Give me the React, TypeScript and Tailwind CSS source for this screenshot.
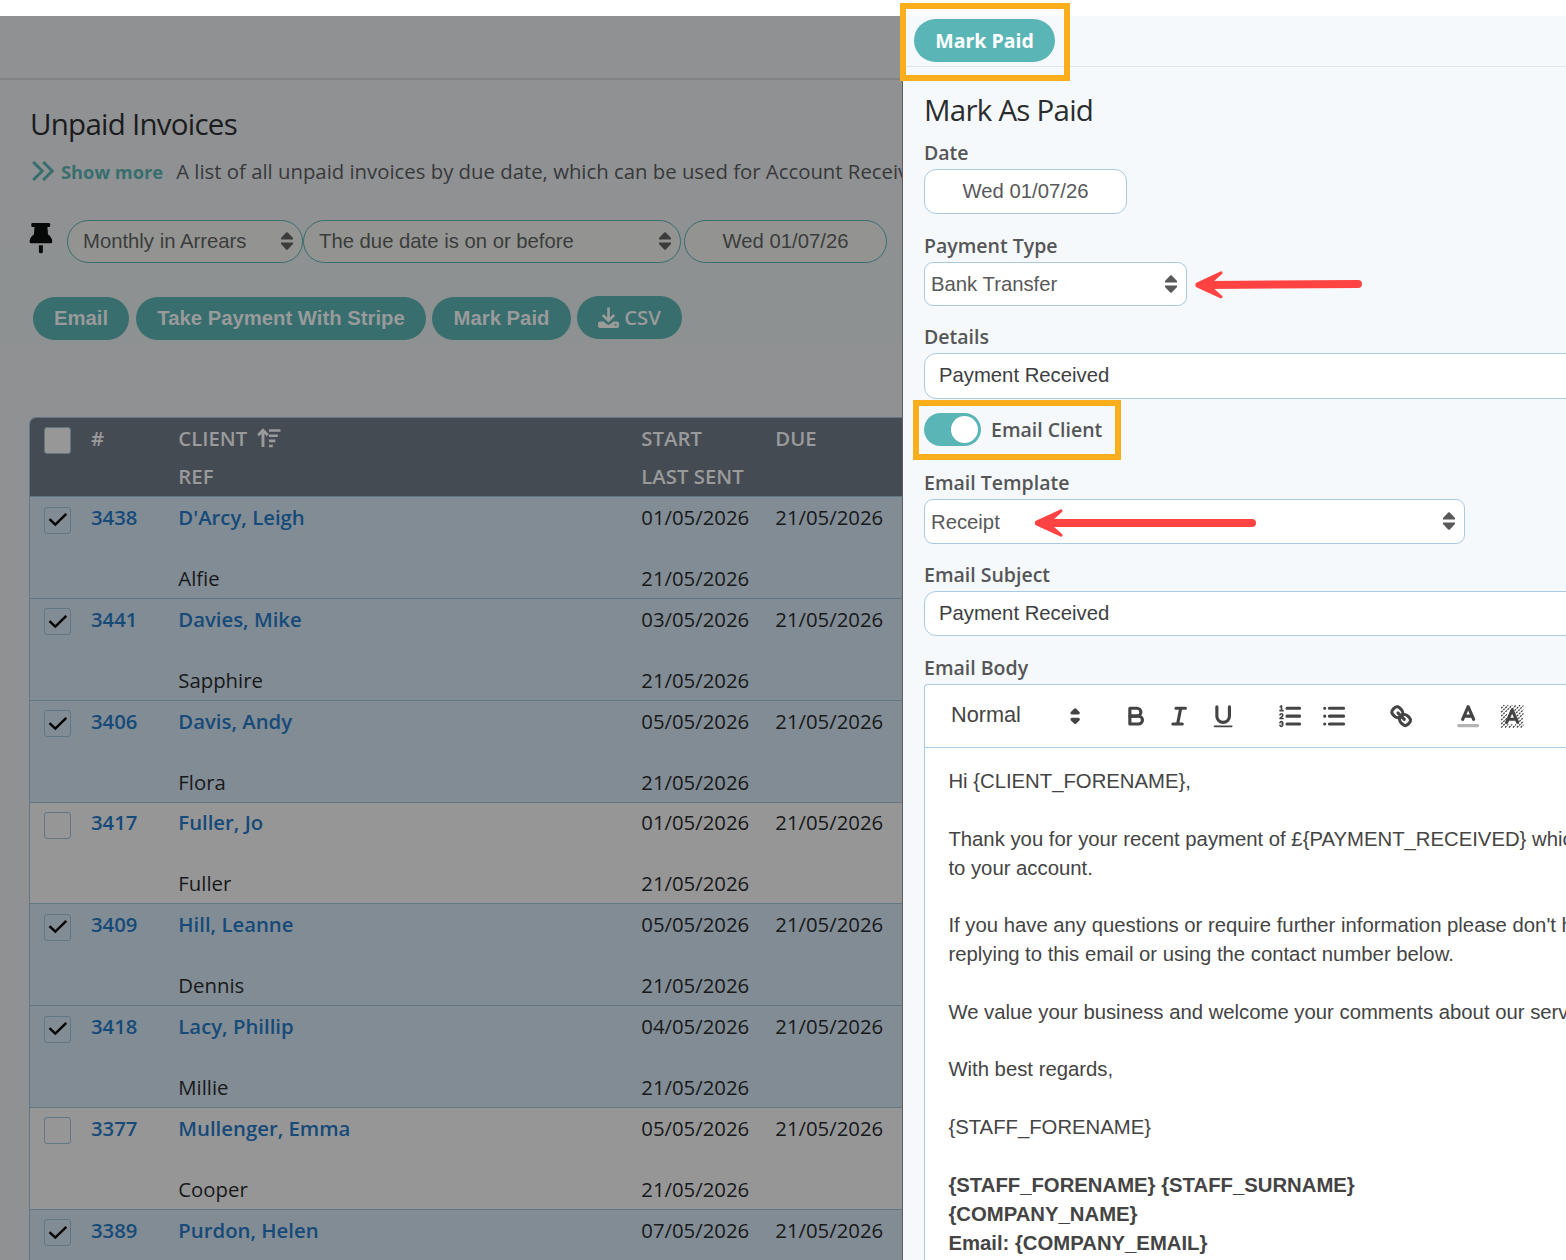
import React from "react";

const OPEN = "font-['Open_Sans',sans-serif]";
const ARIAL = "font-['Liberation_Sans',Arial,sans-serif]";

function Carets({ className = "" }: { className?: string }) {
  return (
    <svg viewBox="0 0 12 18" className={"h-[18px] w-[12px] shrink-0 " + className} fill="currentColor">
      <path d="M5.2 .6a1.2 1.2 0 0 1 1.6 0L12 6v1.6H0V6z" />
      <path d="M5.2 17.4a1.2 1.2 0 0 0 1.6 0L12 12v-1.6H0V12z" />
    </svg>
  );
}

function Check() {
  return (
    <svg viewBox="0 0 20 16" className="h-[16px] w-[20px]" fill="none" stroke="#000" strokeWidth="2.4">
      <path d="M1.500 7.200l5.800 5.400L18.300 1.800" />
    </svg>
  );
}

function Pin() {
  return (
    <svg viewBox="0 0 24 31" className="mb-[7px] h-[31px] w-[24px] shrink-0" fill="#060808">
      <path d="M3.600 0h16.300q1.300 0 1.300 1.300v1.400q0 1.300-1.300 1.300h-1.500l.6 7.600c2.600 1.600 4 3.900 4.300 6.900q.1 1.700-1.400 1.700H2q-1.500 0-1.400-1.700c.3-3 1.700-5.300 4.300-6.900l.6-7.600H3.600q-1.300 0-1.300-1.300V1.300Q2.300 0 3.600 0z" />
      <path d="M9.900 22.200h4v6.500q0 1.600-2 1.600t-2-1.600z" />
    </svg>
  );
}

function DownloadIcon() {
  return (
    <svg viewBox="0 0 21 21" className="h-[21px] w-[21px]" fill="none" stroke="#9a9c9a" strokeWidth="2.600">
      <path d="M10.500 .5v13M4.800 8l5.700 5.700L16.200 8" />
      <path fill="#9a9c9a" stroke="none" d="M2 14.600h3.600l3 2.400q1.900 1.400 3.800 0l3-2.400H19q2 0 2 2v2.400q0 2-2 2H2q-2 0-2-2v-2.400q0-2 2-2zM17.700 16.800a1 1 0 1 0 0 2 1 1 0 0 0 0-2z" />
    </svg>
  );
}

function SortIcon() {
  return (
    <svg viewBox="0 0 24 20" className="h-[20px] w-[24px]" fill="none" stroke="#999a9b" strokeWidth="2.900">
      <path d="M6 19V2.500M1.200 7.300L6 2.300l4.800 5" />
      <path d="M12 2.500h11.500M12 7.700h8.800M12 12.900h6.400M12 18h3.800" strokeWidth="2.600" />
    </svg>
  );
}

const rows = [
  { id: "3438", name: "D'Arcy, Leigh", ref: "Alfie", start: "01/05/2026", on: true },
  { id: "3441", name: "Davies, Mike", ref: "Sapphire", start: "03/05/2026", on: true },
  { id: "3406", name: "Davis, Andy", ref: "Flora", start: "05/05/2026", on: true },
  { id: "3417", name: "Fuller, Jo", ref: "Fuller", start: "01/05/2026", on: false },
  { id: "3409", name: "Hill, Leanne", ref: "Dennis", start: "05/05/2026", on: true },
  { id: "3418", name: "Lacy, Phillip", ref: "Millie", start: "04/05/2026", on: true },
  { id: "3377", name: "Mullenger, Emma", ref: "Cooper", start: "05/05/2026", on: false },
  { id: "3389", name: "Purdon, Helen", ref: "", start: "07/05/2026", on: true },
];

const GRID = "grid grid-cols-[61px_87.300px_463px_134px_200px]";
const PILL = "flex h-[43px] shrink-0 items-center rounded-full border border-[#386e6e] bg-[#939492] text-[#3b3c3b]";
const BTN = "flex h-[43px] shrink-0 items-center justify-center rounded-full bg-[#386e6e] font-bold text-[#999a9b]";

function Invoices() {
  return (
    <main className="flex h-full w-[902px] shrink-0 flex-col overflow-hidden whitespace-nowrap bg-[#909193]">
      <div className="h-[64px] shrink-0 border-b-2 border-[#828385]" />
      <h1 className={OPEN + " mt-[24px] h-[40px] pl-[30px] text-[29.500px] leading-[40px] tracking-[-0.750px] text-[#1b1c1e]"}>Unpaid Invoices</h1>
      <div className={OPEN + " mt-[13px] flex h-[30px] items-center pl-[32px] text-[20.330px] leading-[30px] text-[#37393a]"}>
        <svg viewBox="0 0 22 20" className="mb-[2px] mr-[7px] h-[20px] w-[22px] shrink-0" fill="none" stroke="#386e6e" strokeWidth="3">
          <path d="M1.200 1l9 9-9 9M11.200 1l9 9-9 9" />
        </svg>
        <b className="mr-[13px] text-[18.300px] font-bold text-[#386e6e]">Show more</b>
        <span className="mb-[2px]">A list of all unpaid invoices by due date, which can be used for Account Receivables</span>
      </div>
      <div className="flex h-[214px] shrink-0 flex-col bg-linear-to-b from-[#909193] via-[#8d9191] to-[#909193]">
        <div className={ARIAL + " mt-[33px] flex h-[43px] items-center pl-[29px] text-[20.300px]"}>
          <Pin />
          <div className={PILL + " ml-[14px] w-[236px] justify-between pl-[15px] pr-[9px]"}>Monthly in Arrears<Carets className="mb-px" /></div>
          <div className={PILL + " w-[378px] justify-between pl-[15px] pr-[9px]"}>The due date is on or before<Carets className="mb-px" /></div>
          <div className={PILL + " ml-[3px] w-[203px] justify-center"}>Wed 01/07/26</div>
        </div>
        <div className={ARIAL + " mt-[33px] flex h-[44px] items-end gap-[6px] pl-[33px] text-[20.300px]"}>
          <div className={BTN + " mr-px w-[96px]"}>Email</div>
          <div className={BTN + " w-[290px]"}>Take Payment With Stripe</div>
          <div className={BTN + " w-[139px]"}>Mark Paid</div>
          <div className={BTN + " " + OPEN + " mb-px w-[105px] gap-[5px] text-[20.330px] !font-semibold"}><DownloadIcon />CSV</div>
        </div>
      </div>
      <div className="ml-[29px] mt-[16px] shrink-0 overflow-hidden rounded-tl-[7px] border-l border-t border-[#637684]">
        <div className={GRID + " " + OPEN + " h-[79.300px] border-b border-[#637684] bg-[#454b53] pt-px text-[20.330px] font-semibold leading-[38px] text-[#999a9b]"}>
          <div className="pl-[14px] pt-[8px]"><div className="h-[27px] w-[27px] rounded-[3px] border border-[#637684] bg-[#979797]" /></div>
          <div>#</div>
          <div><div className="flex items-center gap-[10px]">CLIENT <SortIcon /></div>REF</div>
          <div>START<br />LAST SENT</div>
          <div>DUE</div>
        </div>
        {rows.map((r) => (
          <div key={r.id} className={GRID + " " + OPEN + " h-[101.800px] border-b border-[#637684] pt-[4.700px] text-[20.330px] leading-[30px] text-[#17191b] " + (r.on ? "bg-[#828c94]" : "bg-[#969696]")}>
            <div className="pl-[14px] pt-[4.600px]"><div className="flex h-[27px] w-[27px] items-center justify-center rounded-[3px] border border-[#637684]">{r.on && <Check />}</div></div>
            <div className="font-semibold text-[#164a78]">{r.id}</div>
            <div><div className="font-semibold text-[#164a78]">{r.name}</div><div className="mt-[31px]">{r.ref}</div></div>
            <div>{r.start}<div className="mt-[31px]">21/05/2026</div></div>
            <div>21/05/2026</div>
          </div>
        ))}
      </div>
    </main>
  );
}

const LABEL = "block h-[28px] text-[19.500px] font-semibold leading-[28px] text-[#555657] font-['Open_Sans',sans-serif]";
const INPUT = "flex shrink-0 items-center border border-[#a9cae2] bg-white text-[20.300px] text-[#3d3e3f] font-['Liberation_Sans',Arial,sans-serif]";

function Icon({ children, className = "" }: { children: React.ReactNode; className?: string }) {
  return (
    <svg viewBox="0 0 18 18" className={"h-[28.300px] w-[28.300px] shrink-0 " + className} fill="none" stroke="#444" strokeWidth="2" strokeLinecap="round" strokeLinejoin="round">
      {children}
    </svg>
  );
}

function Toolbar() {
  return (
    <div className={ARIAL + " flex h-[63px] items-center border-b border-[#a9cae2] pl-[26px] text-[21.700px] text-[#444]"}>
      <span className="mt-[-1px] w-[110px]">Normal</span>
      <Icon>
        <polygon fill="#444" points="7 11 9 13 11 11" />
        <polygon fill="#444" points="7 7 9 5 11 7" />
      </Icon>
      <Icon className="ml-[32.500px]">
        <path d="M5,4H9.500A2.500,2.500,0,0,1,12,6.500v0A2.500,2.500,0,0,1,9.500,9H5V4Z" />
        <path d="M5,9h5.500A2.500,2.500,0,0,1,13,11.500v0A2.500,2.500,0,0,1,10.500,14H5V9Z" />
      </Icon>
      <Icon className="ml-[15px]"><path d="M7 4h6M5 14h6M8 14L10 4" /></Icon>
      <Icon className="ml-[15.500px]">
        <path d="M5,3V9a4.012,4.012,0,0,0,4,4H9a4.012,4.012,0,0,0,4-4V3" />
        <rect x="3" y="15" width="12" height="1" rx=".5" fill="#444" stroke="none" />
      </Icon>
      <Icon className="ml-[39.200px]">
        <path d="M7 4h8M7 9h8M7 14h8" />
        <g strokeWidth="1">
          <path d="M2.500 5.500h2M2.700 3l.8-.5v3" />
          <path d="M4.500,10.500h-2c0-.234,1.850-1.076,1.850-2.234A0.959,0.959,0,0,0,2.500,8.156" />
          <path d="M2.500,14.846a0.959,0.959,0,0,0,1.850-.109A0.700,0.700,0,0,0,3.750,14a0.688,0.688,0,0,0,.6-0.736,0.959,0.959,0,0,0-1.850-.109" />
        </g>
      </Icon>
      <Icon className="ml-[15.700px]"><path d="M6 4h9M6 9h9M6 14h9M3 4h0M3 9h0M3 14h0" /></Icon>
      <Icon className="ml-[38.700px]">
        <path d="M7 7l4 4" />
        <path d="M8.900,4.577a3.476,3.476,0,0,1,.36,4.679A3.476,3.476,0,0,1,4.577,8.900C3.185,7.500,2.035,6.400,4.217,4.217S7.500,3.185,8.900,4.577Z" />
        <path d="M13.423,9.100a3.476,3.476,0,0,0-4.679-.36,3.476,3.476,0,0,0,.36,4.679c1.392,1.392,2.500,2.542,4.679.36S14.815,10.500,13.423,9.100Z" />
      </Icon>
      <Icon className="ml-[38.700px]">
        <path d="M3 15h12" strokeOpacity=".4" />
        <path d="M5.500 11L9 3l3.500 8M11.630 9H6.380" />
      </Icon>
      <Icon className="ml-[15.600px]">
        <g strokeWidth=".8" strokeDasharray="1.300 .6" strokeLinecap="butt">
          <path d="M2 4l2-2M2 6.500l4.500-4.500M2 9l7-7M2 11.500l4-4M2 14l4-4M2 16.300l3-3M9 4.500l2.500-2.500M10.500 5.500L14 2M11.500 7L16.200 2.300M12 9l4.200-4.200M12.800 10.700l3.400-3.400M13.500 12.500l2.700-2.700M4.500 16.200l2-2M7 16.200l2-2M9.500 16.200l2-2M12 16.200l4.200-4M14.400 16.200l1.800-1.800" />
        </g>
        <path d="M5.500 13L9 5l3.500 8M11.630 11H6.380" />
      </Icon>
    </div>
  );
}

function Panel() {
  return (
    <aside className="flex h-full w-[664px] shrink-0 flex-col overflow-hidden whitespace-nowrap border-l border-[#5c5d5e] bg-[#f5f9fc]">
      <div className="flex h-[51px] shrink-0 items-start border-b border-[#e4e6e8] pl-[11px] pt-[3px]">
        <button className={OPEN + " h-[43px] w-[141px] rounded-full bg-[#5ab6b6] text-[19.500px] font-bold text-white"}>Mark Paid</button>
      </div>
      <div className="flex grow flex-col pl-[21px]">
        <h2 className={OPEN + " mt-[23px] h-[40px] text-[29.500px] leading-[40px] tracking-[-0.750px] text-[#2c2d2e]"}>Mark As Paid</h2>
        <label className={LABEL + " mt-[9px]"}>Date</label>
        <div className={INPUT + " mt-[2px] h-[45px] w-[203px] justify-center rounded-[12px] !text-[#58595a]"}>Wed 01/07/26</div>
        <label className={LABEL + " mt-[18px]"}>Payment Type</label>
        <div className={INPUT + " mt-[2px] h-[44px] w-[263px] justify-between rounded-[9px] pl-[6px] pr-[9px] !text-[#58595a]"}>Bank Transfer<Carets /></div>
        <label className={LABEL + " mt-[17px]"}>Details</label>
        <div className={INPUT + " mt-[2px] h-[46px] w-[700px] rounded-[12px] pl-[14px] pb-[2px]"}>Payment Received</div>
        <div className="mt-[14px] flex h-[33px] items-center">
          <div className="flex h-[33px] w-[57px] items-center justify-end rounded-full bg-[#5ab6b6] pr-[3px]"><div className="h-[27px] w-[27px] rounded-full bg-white" /></div>
          <span className={LABEL + " ml-[10px]"}>Email Client</span>
        </div>
        <label className={LABEL + " mt-[23px]"}>Email Template</label>
        <div className={INPUT + " mt-[2px] h-[45px] w-[541px] justify-between rounded-[9px] pl-[6px] pr-[9px] pt-px !text-[#58595a]"}>Receipt<Carets className="mb-[2px]" /></div>
        <label className={LABEL + " mt-[17px]"}>Email Subject</label>
        <div className={INPUT + " mt-[2px] h-[45px] w-[700px] rounded-[12px] pl-[14px]"}>Payment Received</div>
        <label className={LABEL + " mt-[18px]"}>Email Body</label>
        <div className="mt-[2px] w-[700px] grow rounded-tl-[4px] border-l border-t border-[#a9cae2] bg-white">
          <Toolbar />
          <div className={ARIAL + " whitespace-pre pl-[23.400px] pt-[19px] text-[20.310px] leading-[28.840px] text-[#444]"}>
            {"Hi {CLIENT_FORENAME},\n\nThank you for your recent payment of £{PAYMENT_RECEIVED} which has been applied\nto your account.\n\nIf you have any questions or require further information please don't hesitate\nreplying to this email or using the contact number below.\n\nWe value your business and welcome your comments about our services.\n\nWith best regards,\n\n{STAFF_FORENAME}\n\n"}
            <b>{"{STAFF_FORENAME} {STAFF_SURNAME}\n{COMPANY_NAME}\nEmail: {COMPANY_EMAIL}"}</b>
          </div>
        </div>
      </div>
    </aside>
  );
}

export default function App() {
  return (
    <div className="relative flex h-[1260px] w-[1566px] overflow-hidden bg-white pt-[16px]">
      <Invoices />
      <Panel />
      <div className="absolute left-[900px] top-[3px] h-[78px] w-[170px] border-[6px] border-[#fbae1b]" />
      <div className="absolute left-[913px] top-[400px] h-[60px] w-[208px] border-[6px] border-[#fbae1b]" />
      <svg className="absolute left-[1194px] top-[268px] h-[34px] w-[170px]" fill="#ff4343" stroke="#ff4343" strokeLinecap="round">
        <path d="M16 17L164 16" strokeWidth="8" />
        <path d="M3 16L27 4.800L18 13V21L27 28.800L3 18Z" strokeWidth="3" strokeLinejoin="round" />
      </svg>
      <svg className="absolute left-[1033px] top-[506px] h-[34px] w-[226px]" fill="#ff4343" stroke="#ff4343" strokeLinecap="round">
        <path d="M17 17H219" strokeWidth="8" />
        <path d="M3.500 16L28 4.800L19 13V21L28 29.200L3.500 18Z" strokeWidth="3" strokeLinejoin="round" />
      </svg>
    </div>
  );
}
